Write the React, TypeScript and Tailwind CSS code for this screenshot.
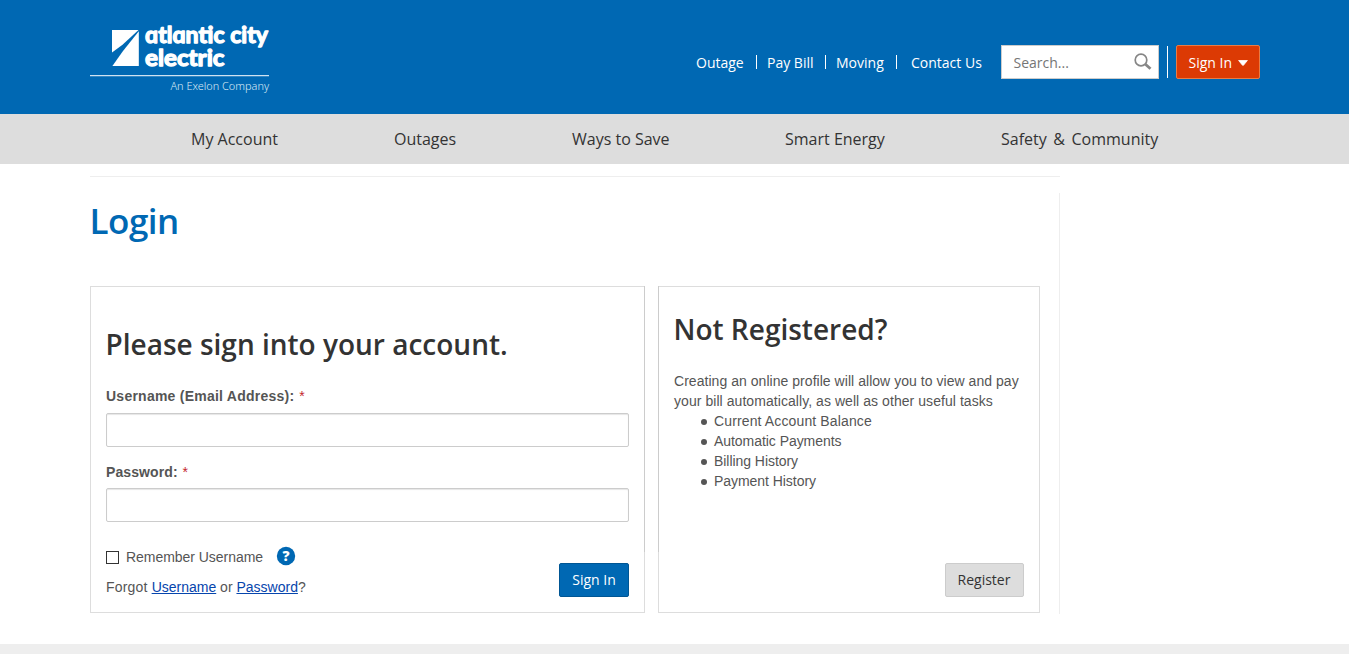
import type { ReactNode } from "react";

const sans = "font-['Open_Sans',sans-serif]";

function Logo() {
  return (
    <svg className="block" width="190" height="88" viewBox="0 -12 190 88" role="img" aria-label="Atlantic City Electric">
      <path d="M22 6H48.5L32.5 20.8L22 28.6Z" fill="#fff" />
      <path d="M48.8 7.2V42H22.4L33 27Z" fill="#fff" />
      <g fill="#fff" stroke="#fff" strokeWidth="1.3" strokeLinejoin="round" fontFamily="Lato, sans-serif" fontWeight="700" fontSize="22.8">
        <text x="55" y="19" textLength="123" lengthAdjust="spacingAndGlyphs">ɑtlɑntic city</text>
        <text x="55" y="42" textLength="79.5" lengthAdjust="spacingAndGlyphs">electric</text>
      </g>
      <path d="M0 51.6H179" stroke="#cfe2f1" strokeWidth="1.2" />
      <text x="80.5" y="66" textLength="98.5" fontFamily="'Noto Sans', sans-serif" fontSize="10.5" fontWeight="300" fill="#dceaf5" lengthAdjust="spacingAndGlyphs">An Exelon Company</text>
    </svg>
  );
}

function Divider() {
  return <i className="h-3.5 w-px bg-white" />;
}

function Header() {
  return (
    <header className={`${sans} h-[114px] bg-[#0068b3] pl-[90px] flex text-sm text-white`}>
      <div className="pt-3 w-[606px]">
        <Logo />
      </div>
      <div className="flex items-center h-[34px] mt-[45px] whitespace-nowrap">
        <a className="w-[60px] pt-0.5">Outage</a>
        <Divider />
        <a className="w-[58px] pt-0.5 ml-2.5">Pay Bill</a>
        <Divider />
        <a className="w-[60px] pt-0.5 ml-2.5">Moving</a>
        <Divider />
        <a className="w-[90px] pt-0.5 ml-3.5">Contact Us</a>
        <div className="w-[158px] h-[34px] bg-white border border-[#ccc] pl-[11.5px] pr-1.5 flex items-center justify-between text-[#757575]">
          <span className="pt-0.5">Search...</span>
          <svg width="18" height="18" viewBox="0 0 18 18" className="mb-px" fill="none" stroke="#868686">
            <circle cx="7" cy="7" r="5.8" strokeWidth="1.7" />
            <path d="M11.4 11.2L16.5 15.8" strokeWidth="2.8" />
          </svg>
        </div>
        <i className="h-8 w-px bg-white mx-2" />
        <button className="w-[84px] h-[34px] rounded-[2px] border border-[#e87b45] bg-[#dc3a04] pl-[11.5px] flex items-center gap-[6px]">
          <span className="pt-0.5">Sign In</span>
          <svg width="10" height="6" viewBox="0 0 10 6" className="mt-0.5">
            <path d="M0.6 0.5H9.4L5.5 5.2Q5 5.7 4.5 5.2Z" fill="#fff" stroke="#fff" strokeWidth="0.8" strokeLinejoin="round" />
          </svg>
        </button>
      </div>
    </header>
  );
}

function Field({ label, className }: { label: ReactNode; className: string }) {
  return (
    <label className={className}>
      <span className="block h-5 leading-5 font-bold">
        {label} <span className="text-[#c4262e] font-normal ml-px">*</span>
      </span>
      <input className="block w-full h-[34px] rounded-[2px] border border-[#ccc] bg-white shadow-[inset_0_1px_1px_rgba(0,0,0,0.1)]" />
    </label>
  );
}

const perks = ["Current Account Balance", "Automatic Payments", "Billing History", "Payment History"];

export default function App() {
  return (
    <div className="bg-white h-[654px] overflow-hidden">
      <div className="w-[1349px] h-[654px] flex flex-col">
        <Header />
        <nav className={`${sans} h-[50px] shrink-0 bg-[#ddd] pl-[191px] flex items-center text-base text-[#333] whitespace-nowrap`}>
          <a className="w-[203px]">My Account</a>
          <a className="w-[178px]">Outages</a>
          <a className="w-[213px]">Ways to Save</a>
          <a className="w-[216px]">Smart Energy</a>
          <a className="[word-spacing:2.4px]">Safety &amp; Community</a>
        </nav>
        <div className="ml-[90px] mt-3 w-[970px] border-t border-[#eee]" />
        <main className="ml-[90px] mt-4 w-[970px] h-[421px] shrink-0 border-r border-[#eee] font-['Liberation_Sans',sans-serif] text-sm leading-5 text-[#555]">
          <h1 className={`${sans} text-[35px] leading-[40px] font-semibold tracking-[-0.5px] text-[#0068b3] pt-2 -ml-[0.5px] h-[93px]`}>Login</h1>
          <div className="flex gap-[13px] h-[327px]">
            <section className="relative w-[555px] border border-[#ddd] px-[15px] flex flex-col">
              <i className="absolute -right-px -top-px w-px h-[266px] bg-[#ccc]" />
              <h2 className={`${sans} mt-[37px] h-10 text-[28px] leading-10 font-semibold text-[#333] whitespace-nowrap -ml-[0.5px]`}>Please sign into your account.</h2>
              <Field label={<span className="tracking-[0.24px]">Username (Email Address):</span>} className="mt-[22px] [&>input]:mt-[7px]" />
              <Field label={<span className="tracking-[0.1px]">Password:</span>} className="mt-[15px] [&>input]:mt-[6px]" />
              <div className="flex items-end justify-between mt-6">
                <div>
                  <div className="flex items-center h-5">
                    <span className="size-[13px] border border-[#333] bg-white mt-[3px] mr-[7px]" />
                    <span className="mt-0.5 tracking-[-0.04px]">Remember Username</span>
                    <svg width="20" height="20" viewBox="0 0 20 20" className="ml-[13px]">
                      <circle cx="10" cy="10" r="9.2" fill="#0068b3" />
                      <text x="10" y="15" textAnchor="middle" fontFamily="'Open Sans', sans-serif" fontWeight="800" fontSize="14" fill="#fff">?</text>
                    </svg>
                  </div>
                  <p className="mt-[11px]">
                    <span className="tracking-[0.18px]">Forgot </span>
                    <a className="text-[#0645ad] underline">Username</a> or <a className="text-[#0645ad] underline">Password</a>?
                  </p>
                </div>
                <button className={`${sans} w-[70px] h-[34px] rounded-[2px] border border-[#005694] bg-[#0068b3] text-white`}>Sign In</button>
              </div>
            </section>
            <section className="relative w-[382px] border border-[#ddd] px-[15px] pb-[15px] flex flex-col">
              <i className="absolute -left-px -top-px w-px h-[266px] bg-[#ccc]" />
              <h2 className={`${sans} mt-[22px] h-10 text-[28px] leading-10 font-semibold text-[#333] whitespace-nowrap -ml-[0.5px]`}>Not Registered?</h2>
              <p className="mt-[22px] whitespace-nowrap tracking-[0.04px]">
                Creating an online profile will allow you to view and pay
                <br />
                <span className="tracking-[0.06px]">your bill automatically, as well as other useful tasks</span>
              </p>
              <ul className="pl-[27px]">
                {perks.map((perk, i) => (
                  <li key={perk} className={`flex items-center ${i === 0 ? "tracking-[0.13px]" : "tracking-[-0.05px]"}`}>
                    <i className="size-[6px] rounded-full bg-[#555] mt-[2px] mr-[7px]" />
                    {perk}
                  </li>
                ))}
              </ul>
              <button className={`${sans} mt-auto self-end w-[79px] h-[34px] rounded-[2px] border border-[#ccc] bg-[#ddd] text-[#333] pr-px`}>Register</button>
            </section>
          </div>
        </main>
        <footer className="mt-auto h-2.5 shrink-0 bg-[#eee]" />
      </div>
    </div>
  );
}
